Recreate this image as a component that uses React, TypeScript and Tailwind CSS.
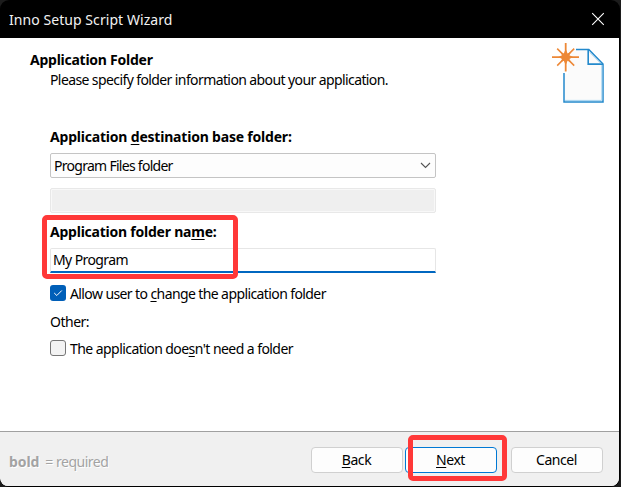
import React from "react";

function WizardImage() {
  return (
    <svg className="h-[62px] w-[54px]" viewBox="0 0 54 62" fill="none">
      <path d="M11.8 31V58.8H51V21.5L36.5 6.5H16V31Z" fill="#fbfbfb" />
      <path d="M24 6.4H36.8L51 21V58.9H12V30" stroke="#2389cc" strokeWidth="1.5" />
      <path d="M13 57.4H49.8M49.8 57V22" stroke="#a4d3f0" strokeWidth="1" />
      <path d="M36.2 6.4V21.1H51" stroke="#2389cc" strokeWidth="1.6" />
      <path d="M38 9.5L49 20.5" stroke="#8fc5e8" strokeWidth="1" />
      <g stroke="#ed8836">
        <path d="M13.7 0V28.5" strokeWidth="1.8" />
        <path d="M0 14.1H27" strokeWidth="1.8" />
        <path d="M5.2 5.6L22.2 22.6M22.2 5.6L5.2 22.6" strokeWidth="1.5" />
      </g>
      <path d="M13.7 6L15.6 10.4 19 9 17.4 12.2 21 14.1 17.4 16 19 19.3 15.6 17.8 13.7 22 11.8 17.8 8.4 19.3 10 16 6.4 14.1 10 12.2 8.4 9 11.8 10.4Z" fill="#ed8836" />
    </svg>
  );
}

function Button({ letter, rest, primary = false }: { letter: string; rest: string; primary?: boolean }) {
  return (
    <button
      className={`flex h-[26px] w-[92px] items-center justify-center rounded-[4px] border bg-[#fdfdfd] pr-px text-[14px] tracking-[-0.45px] ${
        primary ? "border-[#0078d4]" : "border-[#d0d0d0]"
      }`}
    >
      <span>
        <Key>{letter}</Key>
        {rest}
      </span>
    </button>
  );
}

function Key({ children }: { children: string }) {
  return <span className="underline decoration-1 underline-offset-2">{children}</span>;
}

export default function App() {
  return (
    <div className="relative h-[487px] w-[621px] overflow-hidden bg-[#1c1c1c] font-['Noto_Sans',sans-serif] text-[14px] leading-[20px] text-black">
      <div className="flex h-[487px] w-[620px] flex-col overflow-hidden rounded-[9px] bg-black pr-px pb-px">
        <header className="flex h-[38px] shrink-0 items-center justify-between pr-[14px] pl-[9px] text-[#f2f2f2]">
          <h1 className="pt-px tracking-[0.06px]">Inno Setup Script Wizard</h1>
          <svg className="h-[14px] w-[14px]" viewBox="0 0 14 14" stroke="#fff" strokeWidth="1.1">
            <path d="M1.2 1.2L12.8 12.8M12.8 1.2L1.2 12.8" />
          </svg>
        </header>

        <div className="flex min-h-0 flex-1 flex-col overflow-hidden rounded-b-[8px] bg-white">
          <main className="flex h-[393px] shrink-0 flex-col">
            <section className="flex h-[88px] items-start justify-between pr-[13px] pl-[30px]">
              <div className="pt-[12px]">
                <h2 className="font-bold tracking-[-0.25px]">Application Folder</h2>
                <p className="pl-[20px] tracking-[-0.6px]">Please specify folder information about your application.</p>
              </div>
              <div className="pt-[5px]">
                <WizardImage />
              </div>
            </section>

            <form className="flex w-[436px] flex-col pl-[50px]">
              <label className="h-[27px] pt-px font-bold tracking-[-0.2px]">
                Application <Key>d</Key>estination base folder:
              </label>
              <div className="flex h-[25px] items-center justify-between rounded-[2px] border border-[#c4c4c4] bg-[#fdfdfd] pr-[4px] pl-[3px]">
                <span className="tracking-[-0.72px]">Program Files folder</span>
                <svg className="h-[7px] w-[11px]" viewBox="0 0 11 7" fill="none" stroke="#555" strokeWidth="1.1">
                  <path d="M1 1l4.5 4.5L10 1" />
                </svg>
              </div>
              <div className="mt-[10px] h-[25px] rounded-[2px] border border-[#e8e8e8] bg-[#efefef] shadow-[inset_0_0_0_1px_#f8f8f8]" />
              <label className="mt-[9px] h-[26px] font-bold tracking-[-0.23px]">
                Application folder na<Key>m</Key>e:
              </label>
              <div className="flex h-[25px] items-center rounded-t-[2px] border border-b-2 border-[#e6e6e6] border-b-[#0067c0] bg-white pl-[2px] tracking-[-0.6px]">
                My Program
              </div>
              <label className="mt-[11px] flex h-[20px] items-start gap-[4px]">
                <span className="mt-px flex h-[16px] w-[16px] items-center justify-center rounded-[3px] bg-[#005fb8]">
                  <svg className="h-[8px] w-[10px]" viewBox="0 0 10 8" fill="none" stroke="#fff" strokeWidth="1">
                    <path d="M1.2 4l2.6 2.5L8.8 1.5" />
                  </svg>
                </span>
                <span className="tracking-[-0.6px]">
                  Allow user to <Key>c</Key>hange the application folder
                </span>
              </label>
              <p className="mt-[8px] tracking-[-0.5px]">Other:</p>
              <label className="mt-[7px] flex h-[20px] items-start gap-[4px]">
                <span className="mt-px h-[16px] w-[16px] rounded-[3px] border border-[#767676] bg-[#f3f3f3]" />
                <span className="tracking-[-0.56px]">
                  The application doe<Key>s</Key>n't need a folder
                </span>
              </label>
            </form>
          </main>

          <footer className="flex flex-1 items-start justify-between border-t border-[#a0a0a0] bg-[#f0f0f0] pr-[16px] pl-[9px]">
            <p className="pt-[20px] tracking-[-0.5px] text-[#a3a3a3] [text-shadow:1px_1px_0_#fff]">
              <b className="tracking-[-0.1px]">bold</b>
              <span className="pl-[3px]"> = required</span>
            </p>
            <div className="flex pt-[15px]">
              <Button letter="B" rest="ack" />
              <div className="w-[2px]" />
              <Button letter="N" rest="ext" primary />
              <div className="w-[14px]" />
              <Button letter="" rest="Cancel" />
            </div>
          </footer>
        </div>
      </div>

      <div className="absolute top-[215px] left-[42px] h-[64px] w-[196px] rounded-[5px] border-[5px] border-[#ff3838]" />
      <div className="absolute top-[435px] left-[408px] h-[46px] w-[99px] rounded-[5px] border-[5px] border-[#ff3838]" />
    </div>
  );
}
